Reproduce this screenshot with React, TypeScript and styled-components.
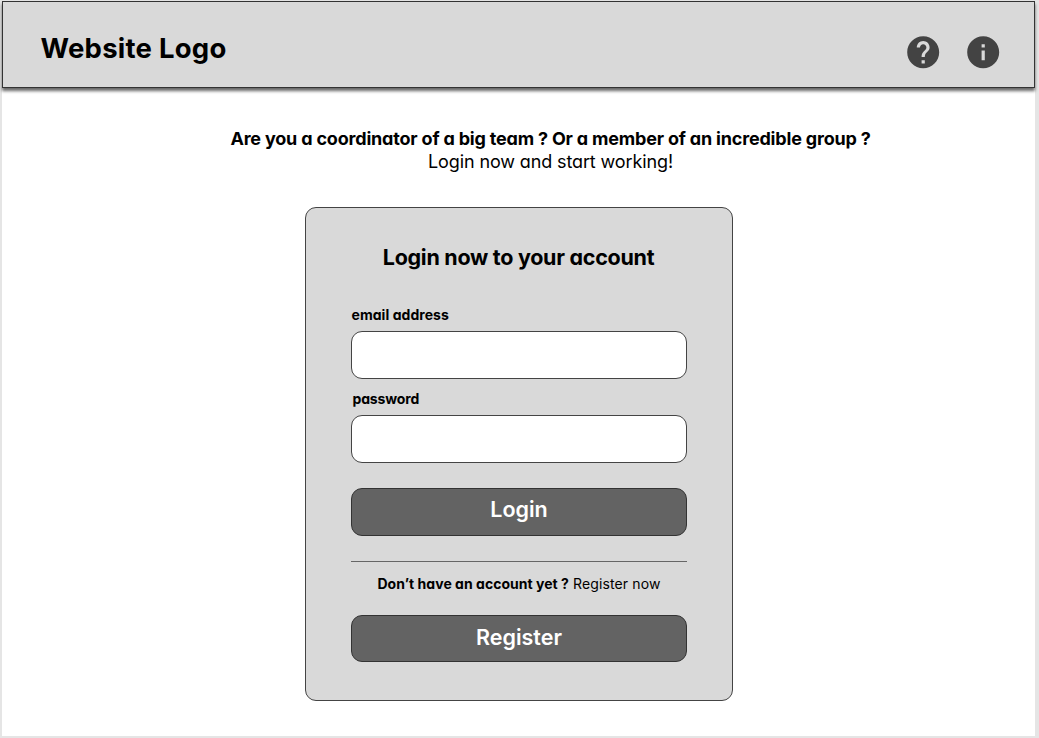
import React from "react";
import styled, { createGlobalStyle } from "styled-components";
import { MdHelp, MdInfo } from "react-icons/md";

const GlobalStyle = createGlobalStyle`
  *, *::before, *::after { box-sizing: border-box; }
  body {
    margin: 0;
    background: #e5e5e5;
    color: #000;
    font-family: Inter, "Liberation Sans", sans-serif;
    font-feature-settings: "cv11";
  }
`;

const Page = styled.div`
  height: 738px;
  padding: 1px 4px 2px 2px;
  overflow: hidden;
`;

const Frame = styled.div`
  height: 735px;
  background: #fff;
  display: flex;
  flex-direction: column;
  align-items: center;
`;

const Header = styled.header`
  align-self: stretch;
  height: 87px;
  display: flex;
  justify-content: space-between;
  padding: 0 32px 0 37.5px;
  background: #d9d9d9;
  border: 1px solid #333;
  box-shadow: 0 3px 3px rgba(0, 0, 0, 0.6);
`;

const Logo = styled.div`
  padding-top: 28.5px;
  font-size: 27.5px;
  line-height: 35px;
  font-weight: 700;
  letter-spacing: 0.25px;
  white-space: nowrap;
`;

const Actions = styled.nav`
  display: flex;
  gap: 21.6px;
  padding-top: 31.2px;
  color: #434343;
  svg { display: block; width: 38.4px; height: 38.4px; }
`;

const Intro = styled.div`
  padding: 39px 0 0 64px;
  text-align: center;
  white-space: nowrap;
  font-size: 18px;
  line-height: 23px;
`;

const Line = styled.p<{ $weight: number; $spacing: number }>`
  margin: 0;
  font-weight: ${(p) => p.$weight};
  letter-spacing: ${(p) => p.$spacing}px;
`;

const Card = styled.form`
  width: 428px;
  height: 494px;
  margin: 34px 0 0 1px;
  padding: 32px 45px 0;
  display: flex;
  flex-direction: column;
  background: #d9d9d9;
  border: 1px solid #444;
  border-radius: 11px;
`;

const Title = styled.h1`
  margin: 0 0 32px;
  padding-right: 1px;
  font-size: 21.5px;
  line-height: 34px;
  font-weight: 700;
  letter-spacing: -0.28px;
  text-align: center;
  white-space: nowrap;
`;

const Field = styled.label<{ $inset?: number; $spacing?: number }>`
  display: flex;
  flex-direction: column;
  margin-bottom: 11px;
  font-size: 14px;
  line-height: 18px;
  font-weight: 700;
  letter-spacing: ${(p) => p.$spacing ?? 0}px;
  span { padding-left: ${(p) => p.$inset ?? 0}px; }
`;

const Input = styled.input`
  width: 100%;
  height: 48px;
  margin-top: 7px;
  padding: 0 12px;
  background: #fff;
  border: 1px solid #444;
  border-radius: 11px;
  font: inherit;
`;

const Button = styled.button<{ $lift: number; $height: number; $top?: number }>`
  flex: none;
  width: 100%;
  height: ${(p) => p.$height}px;
  margin: ${(p) => p.$top ?? 0}px 0 0;
  padding: 0 0 ${(p) => p.$lift}px;
  background: #636363;
  border: 1px solid #333;
  border-radius: 11px;
  color: #fff;
  font-family: inherit;
  font-feature-settings: inherit;
  font-size: 21.5px;
  line-height: 28px;
  font-weight: 600;
`;

const Divider = styled.hr`
  width: 100%;
  height: 1px;
  margin: 25px 0 12px;
  border: 0;
  background: #666;
`;

const Prompt = styled.p`
  margin: 0 0 21px;
  font-size: 14px;
  line-height: 20px;
  font-weight: 400;
  letter-spacing: 0.12px;
  text-align: center;
  white-space: nowrap;
  b { font-weight: 700; letter-spacing: 0.03px; }
`;

export default function App() {
  return (
    <>
      <GlobalStyle />
      <Page>
        <Frame>
          <Header>
            <Logo>Website Logo</Logo>
            <Actions>
              <MdHelp />
              <MdInfo />
            </Actions>
          </Header>
          <Intro>
            <Line $weight={700} $spacing={-0.19}>
              Are you a coordinator of a big team ? Or a member of an incredible group ?
            </Line>
            <Line $weight={400} $spacing={-0.12}>Login now and start working!</Line>
          </Intro>
          <Card>
            <Title>Login now to your account</Title>
            <Field $inset={0.5} $spacing={0.05}>
              <span>email address</span>
              <Input type="email" />
            </Field>
            <Field $inset={1.5} $spacing={-0.15}>
              <span>password</span>
              <Input type="password" />
            </Field>
            <Button type="button" $height={48} $lift={6} $top={14}>
              Login
            </Button>
            <Divider />
            <Prompt>
              <b>Don’t have an account yet ?</b> Register now
            </Prompt>
            <Button type="button" $height={47} $lift={3}>
              Register
            </Button>
          </Card>
        </Frame>
      </Page>
    </>
  );
}
